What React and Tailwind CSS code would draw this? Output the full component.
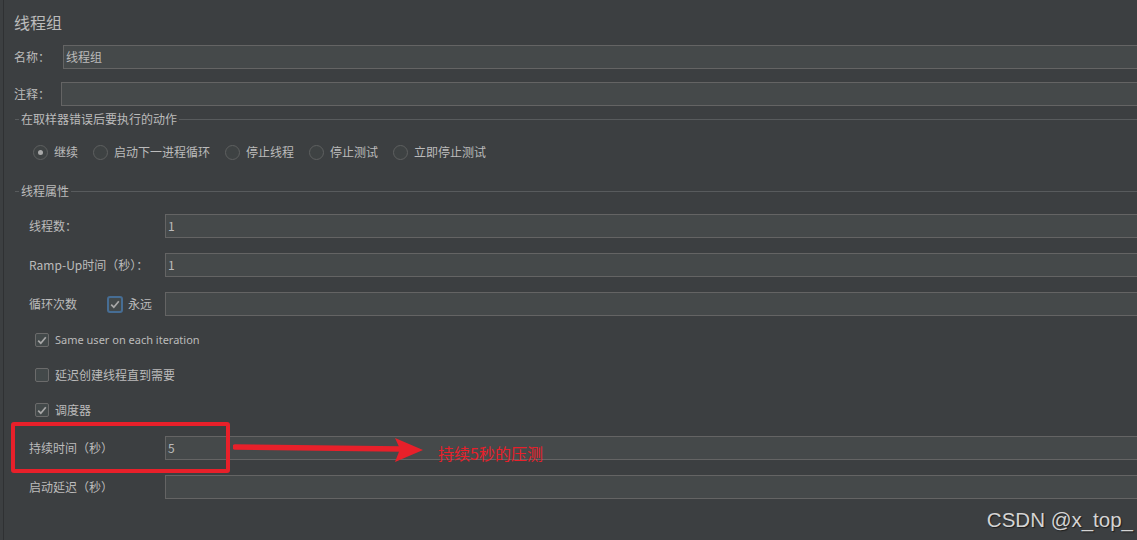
import React from 'react';

const cjk = { fontFamily: '"Noto Sans CJK SC", "Noto Sans", sans-serif' };

const Input = ({ value = '' }) => (
    <div className="flex-1 h-full bg-[#45494a] border border-r-0 border-[#646464] flex items-center pl-[2px] text-[12px] text-[#bbbbbb]">
        {value}
    </div>
);

const Check = ({ checked, focused }) => (
    <div className={focused
        ? "w-[16px] h-[17px] rounded-[3px] border-2 border-[#466d94] bg-[#43494a] flex items-center justify-center"
        : "w-[14px] h-[14px] rounded-[2px] border border-[#6b6b6b] bg-[#43494a] flex items-center justify-center"}>
        {checked && (
            <svg width="10" height="9" viewBox="0 0 10 9">
                <path d="M1.2 4.6 L3.8 7.2 L8.8 1.2" fill="none" stroke="#a8a8a8" strokeWidth="1.7"/>
            </svg>
        )}
    </div>
);

const Radio = ({ selected, label, w }) => (
    <div className="flex items-center shrink-0" style={{ width: w }}>
        <div className="w-[15px] h-[15px] rounded-full border border-[#5e6060] bg-[#3e4243] flex items-center justify-center">
            {selected && <div className="w-[5px] h-[5px] rounded-full bg-[#a9a9a9]"/>}
        </div>
        <span className="ml-[6px]">{label}</span>
    </div>
);

const Legend = ({ title, className }) => (
    <div className={"flex items-center h-[16px] pl-[1px] " + className}>
        <div className="w-[4px] h-px bg-[#585b5d]"/>
        <span className="px-[2px]">{title}</span>
        <div className="flex-1 h-px bg-[#585b5d]"/>
    </div>
);

const App = () => {
    return (
        <div className="relative w-full h-[540px] bg-[#3c3f41] overflow-hidden text-[12px] text-[#bbbbbb]" style={cjk}>
            <div className="absolute left-[3px] top-0 bottom-0 w-px bg-[#2f3133]"/>

            <div className="flex flex-col pl-[14px]">
                <div className="h-[24px] mt-[10px] flex items-center text-[16px]">线程组</div>

                <div className="h-[24px] mt-[11px] flex items-center">
                    <span className="w-[49px] shrink-0">名称：</span>
                    <Input value="线程组"/>
                </div>
                <div className="h-[24px] mt-[13px] flex items-center">
                    <span className="w-[47px] shrink-0">注释：</span>
                    <Input/>
                </div>

                <Legend title="在取样器错误后要执行的动作" className="mt-[5px]"/>

                <div className="h-[16px] mt-[17px] flex items-center pl-[19px]">
                    <Radio selected label="继续" w={60}/>
                    <Radio label="启动下一进程循环" w={132}/>
                    <Radio label="停止线程" w={84}/>
                    <Radio label="停止测试" w={84}/>
                    <Radio label="立即停止测试" w={120}/>
                </div>

                <Legend title="线程属性" className="mt-[23px]"/>

                <div className="flex flex-col pl-[15px]">
                    <div className="h-[24px] mt-[15px] flex items-center">
                        <span className="w-[136px] shrink-0">线程数：</span>
                        <Input value="1"/>
                    </div>
                    <div className="h-[24px] mt-[15px] flex items-center">
                        <span className="w-[136px] shrink-0">Ramp-Up时间（秒）：</span>
                        <Input value="1"/>
                    </div>
                    <div className="h-[24px] mt-[15px] flex items-center">
                        <span className="w-[78px] shrink-0">循环次数</span>
                        <Check checked focused/>
                        <span className="ml-[5px] w-[37px] shrink-0">永远</span>
                        <Input/>
                    </div>

                    <div className="h-[16px] mt-[16px] flex items-center pl-[6px]">
                        <Check checked/>
                        <span className="ml-[6px] text-[11px]" style={{ fontFamily: '"Noto Sans", sans-serif' }}>Same user on each iteration</span>
                    </div>
                    <div className="h-[16px] mt-[19px] flex items-center pl-[6px]">
                        <Check/>
                        <span className="ml-[6px]">延迟创建线程直到需要</span>
                    </div>
                    <div className="h-[16px] mt-[19px] flex items-center pl-[6px]">
                        <Check checked/>
                        <span className="ml-[6px]">调度器</span>
                    </div>

                    <div className="relative h-[24px] mt-[18px] flex items-center">
                        <span className="w-[136px] shrink-0">持续时间（秒）</span>
                        <Input value="5"/>
                        <div className="absolute left-[-18px] top-[-14px] w-[219px] h-[51px] border-[4px] border-[#e8202a] rounded-[3px]"/>
                        <svg className="absolute left-[204px] top-[-6px]" width="200" height="36" viewBox="0 0 200 36">
                            <path d="M2 17 L168 19" stroke="#e8202a" strokeWidth="5.5" strokeLinecap="round"/>
                            <path d="M162 8 L190 20 L162 32 L167 19 Z" fill="#e8202a"/>
                        </svg>
                        <span className="absolute left-[409px] top-[5px] text-[16px] text-[#e8202a]">持续5秒的压测</span>
                    </div>
                    <div className="h-[24px] mt-[15px] flex items-center">
                        <span className="w-[136px] shrink-0">启动延迟（秒）</span>
                        <Input/>
                    </div>
                </div>
            </div>

            <div className="absolute right-[4px] top-[505px] text-[20.5px] text-[#d4d4d4] [text-shadow:1px_1px_1px_#1e1e1e]" style={{ fontFamily: '"Liberation Sans", sans-serif' }}>
                CSDN @x_top_
            </div>
        </div>
    );
};

export default App;
